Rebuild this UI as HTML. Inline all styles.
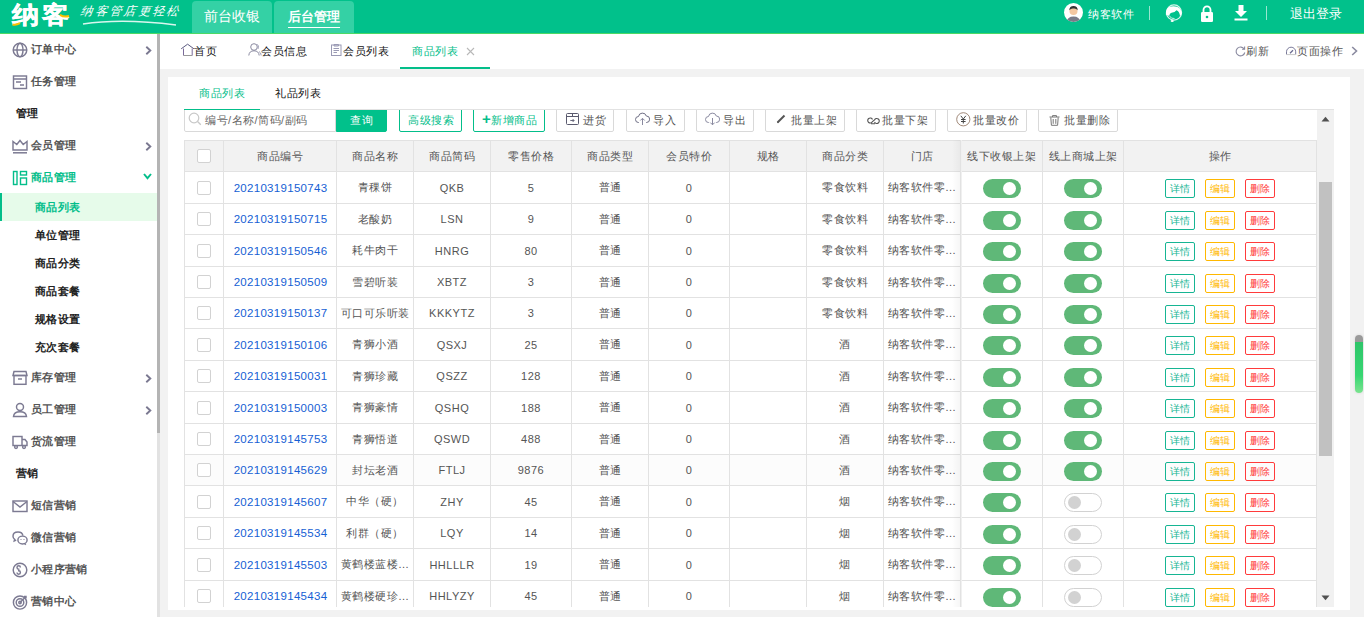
<!DOCTYPE html>
<html><head><meta charset="utf-8">
<style>
*{box-sizing:border-box;margin:0;padding:0}
html,body{width:1364px;height:617px;overflow:hidden;background:#f2f2f2;font-family:"Liberation Sans",sans-serif;color:#333}
.abs{position:absolute}
.tt{top:10px;font-size:11px;letter-spacing:.5px;line-height:14px;white-space:nowrap;font-weight:500}
.tt2{font-size:11px;letter-spacing:.5px;line-height:14px;white-space:nowrap}
.btn{top:100px;height:32px;border:1px solid #d9d9d9;border-radius:2px;background:#fff}
.bt{top:12px;font-size:11px;letter-spacing:.5px;line-height:14px;white-space:nowrap}
.si{left:31px;font-size:11px;letter-spacing:.3px;font-weight:bold;line-height:16px;white-space:nowrap}
.htab{top:1px;height:32px;background:#34d1a5;border-radius:4px 4px 0 0;color:#fff;font-size:14px;text-align:center;line-height:31px}
.htab.act{font-weight:bold;font-size:13px}
.htab.act span{border-bottom:1.5px solid #fff;padding-bottom:3px}
#hdr{position:absolute;left:0;top:0;width:1364px;height:34px;background:#01c18b;border-bottom:1px solid #4cd964}
#side{position:absolute;left:0;top:34px;width:157px;height:583px;background:#fff;overflow:hidden}
#sbar{position:absolute;left:157px;top:34px;width:3px;height:583px;background:#e2e2e2}
#sthumb{position:absolute;left:157px;top:34px;width:3px;height:399px;background:#b4b4b4}
#tabs{position:absolute;left:160px;top:34px;width:1204px;height:35px;background:#fff}
#panel{position:absolute;left:168px;top:77px;width:1182px;height:533px;background:#fff}
.c{position:absolute;border-right:1px solid #e2e2e2;border-bottom:1px solid #e2e2e2;display:flex;align-items:center;justify-content:center;font-size:11px;letter-spacing:.5px;color:#555;white-space:nowrap;overflow:hidden;background:#fff}
.cb{display:inline-block;position:relative;left:-0.5px;width:14px;height:14px;border:1px solid #d2d2d2;border-radius:2px;background:#fff}
.lnk{color:#1560d4;font-size:11.5px;letter-spacing:.3px;position:relative;left:.5px}
.sw{display:inline-block;position:relative;top:1px;width:38px;height:19px;border-radius:10px}
.sw.on{background:#5fb878}
.sw.off{background:#fff;border:1px solid #d2d2d2}
.sw i{position:absolute;width:13px;height:13px;border-radius:50%;top:3px}
.sw.on i{background:#fff;left:20px}
.sw.off i{background:#d2d2d2;left:3px;top:2px}
.ab{display:inline-block;position:relative;top:1px;width:30px;height:19px;border:1px solid;border-radius:2px;font-size:10px;line-height:18px;text-align:center;margin:0 5px;letter-spacing:0}
.ab.g{color:#16b593;border-color:#16b593}
.ab.y{color:#ffb800;border-color:#ffb800}
.ab.r{color:#ff3b3b;border-color:#ff3b3b}
</style></head><body>
<div id="hdr">
 <div class="abs logo" style="left:12px;top:-1px;font-size:27px;line-height:32px;font-weight:900;color:#fff;letter-spacing:2px;-webkit-text-stroke:.4px #fff;transform:scale(1.02,.9);transform-origin:0 50%">纳客</div>
 <svg class="abs" style="left:12px;top:13px" width="58" height="14" viewBox="0 0 58 14"><path d="M0.5 11.5 Q4 12.5 8 10.2" stroke="#ffc000" stroke-width="2" fill="none"/><path d="M48 1.8 Q52 4.5 57 3" stroke="#ffc000" stroke-width="2" fill="none"/></svg>
 <div class="abs slogan" style="left:81px;top:4px;font-size:12px;line-height:14px;color:#fff;font-weight:500;font-style:italic;letter-spacing:2.3px;transform:skewX(-8deg)">纳客管店更轻松</div>
 <svg class="abs" style="left:82px;top:19px" width="96" height="8"><path d="M1 5 Q40 -1 94 6" stroke="#fff" stroke-width="1.3" fill="none" opacity=".85"/></svg>
 <div class="abs htab" style="left:192px;width:80px">前台收银</div>
 <div class="abs htab act" style="left:274px;width:80px"><span>后台管理</span></div>
 <div class="abs" style="left:1064px;top:3px;width:19px;height:19px;border-radius:50%;background:#fff;overflow:hidden">
   <svg width="19" height="19" viewBox="0 0 19 19"><circle cx="9.5" cy="8" r="4" fill="#f4c7a1"/><path d="M5.3 7.2 Q5.5 3 9.5 3 Q13.5 3 13.7 7.2 Q12 5.2 9.5 5.6 Q7 5.2 5.3 7.2Z" fill="#333"/><path d="M2.5 19 Q3.5 13.5 9.5 13.5 Q15.5 13.5 16.5 19Z" fill="#7a7a88"/></svg>
 </div>
 <div class="abs" style="left:1088px;top:6px;font-size:11px;letter-spacing:.5px;line-height:16px;color:#fff;font-weight:500">纳客软件</div>
 <div class="abs" style="left:1149px;top:6px;width:1px;height:14px;background:rgba(255,255,255,.6)"></div>
 <svg class="abs" style="left:1165px;top:3px" width="18" height="19" viewBox="0 0 18 19"><circle cx="9" cy="9.5" r="7.6" stroke="#fff" stroke-width="1.1" fill="none" opacity=".85"/><path d="M0.8 11.5 Q0.6 4.5 6 3.6 Q9 3 12 3.8 Q16.5 5 16.8 11 L15 13 Q14.5 8.5 11.5 7.2 Q10 9.5 6.5 9.8 Q4.5 10.2 4.2 13 Z" fill="#fff"/><path d="M4.5 13 Q6 16 9.5 15.5" stroke="#fff" stroke-width="1" fill="none" opacity=".8"/><ellipse cx="7.2" cy="18" rx="1.6" ry="1" fill="#fff"/></svg>
 <svg class="abs" style="left:1200px;top:5px" width="14" height="17" viewBox="0 0 14 17"><path d="M3.5 7 V4.8 A3.5 3.5 0 0 1 10.5 4.8 V7" stroke="#fff" stroke-width="1.8" fill="none"/><rect x="1" y="7" width="12" height="10" rx="1.2" fill="#fff"/><circle cx="7" cy="12" r="1.3" fill="#01c18b"/></svg>
 <svg class="abs" style="left:1234px;top:5px" width="14" height="16" viewBox="0 0 14 16"><path d="M4.5 0 H9.5 V6 H13 L7 12 L1 6 H4.5Z" fill="#fff"/><rect x="0.5" y="13.5" width="13" height="2" fill="#fff"/></svg>
 <div class="abs" style="left:1266px;top:6px;width:1px;height:14px;background:rgba(255,255,255,.6)"></div>
 <div class="abs" style="left:1290px;top:6px;font-size:13px;line-height:16px;color:#fff">退出登录</div>
</div>
<div id="side"><div class="abs si" style="top:7px;color:#555">订单中心</div><svg class="abs" style="left:12px;top:8px" width="16" height="16" viewBox="0 0 16 16"><circle cx="8" cy="8" r="6.8" stroke="#7c7a92" stroke-width="1.45" fill="none"/><ellipse cx="8" cy="8" rx="3" ry="6.8" stroke="#7c7a92" stroke-width="1.45" fill="none"/><path d="M1.2 8 H14.8" stroke="#7c7a92" stroke-width="1.45" fill="none"/></svg><svg class="abs" style="left:145px;top:12px" width="7" height="9" viewBox="0 0 7 9"><path d="M1.3 0.8 L5.3 4.5 L1.3 8.2" stroke="#7a7890" stroke-width="1.9" fill="none"/></svg><div class="abs si" style="top:39px;color:#555">任务管理</div><svg class="abs" style="left:12px;top:40px" width="16" height="16" viewBox="0 0 16 16"><rect x="1.5" y="2" width="13" height="12.5" stroke="#7c7a92" stroke-width="1.45" fill="none"/><path d="M1.5 5 H14.5 M4 8 H9 M8 11 H12" stroke="#7c7a92" stroke-width="1.45" fill="none"/></svg><div class="abs si" style="left:16px;top:71px;color:#222">管理</div><div class="abs si" style="top:103px;color:#555">会员管理</div><svg class="abs" style="left:12px;top:104px" width="16" height="16" viewBox="0 0 16 16"><path d="M1 12 V3.5 L4.8 6.5 L8 2.5 L11.2 6.5 L15 3.5 V12 Z" stroke="#7c7a92" stroke-width="1.45" fill="none"/><path d="M1 14.8 H15" stroke="#7c7a92" stroke-width="1.5"/></svg><svg class="abs" style="left:145px;top:108px" width="7" height="9" viewBox="0 0 7 9"><path d="M1.3 0.8 L5.3 4.5 L1.3 8.2" stroke="#7a7890" stroke-width="1.9" fill="none"/></svg><div class="abs si" style="top:135px;color:#03be8a">商品管理</div><svg class="abs" style="left:12px;top:136px" width="16" height="16" viewBox="0 0 16 16"><rect x="1.5" y="1.5" width="3.5" height="13" stroke="#03be8a" stroke-width="1.4" fill="none"/><rect x="8.5" y="1.5" width="6" height="3.5" stroke="#03be8a" stroke-width="1.4" fill="none"/><rect x="8.5" y="8" width="6" height="6.5" stroke="#03be8a" stroke-width="1.4" fill="none"/></svg><svg class="abs" style="left:143px;top:139px" width="9" height="7" viewBox="0 0 9 7"><path d="M1 1 L4.5 5.2 L8 1" stroke="#03be8a" stroke-width="1.9" fill="none"/></svg><div class="abs" style="left:0;top:159px;width:157px;height:28px;background:#e6fbea;border-left:2px solid #03be8a"></div><div class="abs si" style="left:35px;top:165px;color:#03be8a">商品列表</div><div class="abs si" style="left:35px;top:193px;color:#222">单位管理</div><div class="abs si" style="left:35px;top:221px;color:#222">商品分类</div><div class="abs si" style="left:35px;top:249px;color:#222">商品套餐</div><div class="abs si" style="left:35px;top:277px;color:#222">规格设置</div><div class="abs si" style="left:35px;top:305px;color:#222">充次套餐</div><div class="abs si" style="top:335px;color:#555">库存管理</div><svg class="abs" style="left:12px;top:336px" width="16" height="16" viewBox="0 0 16 16"><path d="M2 1.5 H14 L15 5.5 H1 Z" stroke="#7c7a92" stroke-width="1.45" fill="none"/><rect x="2" y="5.5" width="12" height="8.8" stroke="#7c7a92" stroke-width="1.45" fill="none"/><path d="M6 9 H10" stroke="#7c7a92" stroke-width="1.45" fill="none"/></svg><svg class="abs" style="left:145px;top:340px" width="7" height="9" viewBox="0 0 7 9"><path d="M1.3 0.8 L5.3 4.5 L1.3 8.2" stroke="#7a7890" stroke-width="1.9" fill="none"/></svg><div class="abs si" style="top:367px;color:#555">员工管理</div><svg class="abs" style="left:12px;top:368px" width="16" height="16" viewBox="0 0 16 16"><circle cx="8" cy="5" r="3.5" stroke="#7c7a92" stroke-width="1.45" fill="none"/><path d="M1.5 14.5 Q2 9.8 8 9.8 Q14 9.8 14.5 14.5 Z" stroke="#7c7a92" stroke-width="1.45" fill="none"/></svg><svg class="abs" style="left:145px;top:372px" width="7" height="9" viewBox="0 0 7 9"><path d="M1.3 0.8 L5.3 4.5 L1.3 8.2" stroke="#7a7890" stroke-width="1.9" fill="none"/></svg><div class="abs si" style="top:399px;color:#555">货流管理</div><svg class="abs" style="left:12px;top:400px" width="16" height="16" viewBox="0 0 16 16"><rect x="1" y="2.5" width="9" height="9" stroke="#7c7a92" stroke-width="1.45" fill="none"/><path d="M10 5.5 H13 L15 8 V11.5 H10" stroke="#7c7a92" stroke-width="1.45" fill="none"/><circle cx="4" cy="13" r="1.4" stroke="#7c7a92" stroke-width="1.45" fill="none"/><circle cx="12" cy="13" r="1.4" stroke="#7c7a92" stroke-width="1.45" fill="none"/></svg><div class="abs si" style="left:16px;top:431px;color:#222">营销</div><div class="abs si" style="top:463px;color:#555">短信营销</div><svg class="abs" style="left:12px;top:464px" width="16" height="16" viewBox="0 0 16 16"><rect x="1" y="3" width="14" height="10.5" stroke="#7c7a92" stroke-width="1.45" fill="none"/><path d="M1 3.5 L8 9 L15 3.5" stroke="#7c7a92" stroke-width="1.45" fill="none"/></svg><div class="abs si" style="top:495px;color:#555">微信营销</div><svg class="abs" style="left:12px;top:496px" width="16" height="16" viewBox="0 0 16 16"><path d="M6 2 C2.8 2 1 4 1 6.2 C1 7.6 1.7 8.6 2.6 9.3 L2.2 11 L4.2 10.2" stroke="#7c7a92" stroke-width="1.45" fill="none"/><path d="M6 2 C8.8 2 10.6 3.5 10.9 5.6" stroke="#7c7a92" stroke-width="1.45" fill="none"/><ellipse cx="10.5" cy="10" rx="4.6" ry="3.9" stroke="#7c7a92" stroke-width="1.45" fill="none"/><path d="M12.6 13.5 L13.8 14.8" stroke="#7c7a92" stroke-width="1.45" fill="none"/><circle cx="9" cy="9.5" r=".6" fill="#7c7a92"/><circle cx="12" cy="9.5" r=".6" fill="#7c7a92"/></svg><div class="abs si" style="top:527px;color:#555">小程序营销</div><svg class="abs" style="left:12px;top:528px" width="16" height="16" viewBox="0 0 16 16"><circle cx="8" cy="8" r="6.8" stroke="#7c7a92" stroke-width="1.45" fill="none"/><path d="M5 10.5 A1.7 1.7 0 1 0 6.7 8.8 V7.2 A1.7 1.7 0 1 1 8.4 5.5" stroke="#7c7a92" stroke-width="1.45" fill="none"/></svg><div class="abs si" style="top:559px;color:#555">营销中心</div><svg class="abs" style="left:12px;top:560px" width="16" height="16" viewBox="0 0 16 16"><circle cx="8" cy="8.5" r="6.6" stroke="#7c7a92" stroke-width="1.45" fill="none"/><circle cx="8" cy="8.5" r="3.8" stroke="#7c7a92" stroke-width="1.45" fill="none"/><circle cx="8" cy="8.5" r="1.2" stroke="#7c7a92" stroke-width="1.45" fill="none"/><path d="M8 8.5 L14 2.5 M12 2.5 H14 V4.5" stroke="#7c7a92" stroke-width="1.45" fill="none"/></svg></div>
<div id="sbar"></div><div id="sthumb"></div>
<div id="tabs">
 <svg class="abs" style="left:20px;top:9px" width="15" height="14" viewBox="0 0 15 14"><path d="M1.2 5.8 L7.6 1.2 L13.9 5.8" stroke="#5a5a80" stroke-width="1" fill="none"/><path d="M3.5 5.5 V12.5 M12.2 5.5 V12.5" stroke="#7a6a9a" stroke-width="1" fill="none"/><path d="M3.5 12.5 H12.2" stroke="#999" stroke-width="1" fill="none"/></svg>
 <div class="abs tt" style="left:34px;color:#111">首页</div>
 <svg class="abs" style="left:88px;top:9px" width="14" height="13" viewBox="0 0 14 13"><circle cx="6" cy="4" r="3.3" stroke="#8a8aa0" stroke-width="1" fill="none"/><path d="M0.8 12.5 Q1.2 7.8 6 7.8 Q10.8 7.8 11.2 12.5" stroke="#8a8aa0" stroke-width="1" fill="none"/><path d="M9 1.2 Q11.5 2.5 10 6 M11 8.5 Q13 9.5 13.2 12.5" stroke="#a0a0b8" stroke-width="1" fill="none"/></svg>
 <div class="abs tt" style="left:101px;color:#111">会员信息</div>
 <svg class="abs" style="left:171px;top:10px" width="11" height="12" viewBox="0 0 11 12"><rect x="0.5" y="1" width="9.5" height="10.5" stroke="#9a9ab4" stroke-width="1" fill="none"/><path d="M3 0.5 H7.5 V2 H3Z M2.5 4.5 H8 M2.5 6.5 H8 M2.5 8.5 H6" stroke="#9a9ab4" stroke-width="1" fill="none"/></svg>
 <div class="abs tt" style="left:183px;color:#111">会员列表</div>
 <div class="abs tt" style="left:252px;color:#03be8a">商品列表</div>
 <svg class="abs" style="left:306px;top:13px" width="9" height="9" viewBox="0 0 9 9"><path d="M1 1 L8 8 M8 1 L1 8" stroke="#b8b8b8" stroke-width="1.1"/></svg>
 <div class="abs" style="left:240px;top:33px;width:90px;height:2px;background:#03be8a"></div>
 <svg class="abs" style="left:1075px;top:12px" width="11" height="11" viewBox="0 0 11 11"><path d="M9.3 3.2 A4.4 4.4 0 1 0 9.8 6.5" stroke="#8a8aa0" stroke-width="1.1" fill="none"/><path d="M7 3.2 H9.6 V0.6" stroke="#8a8aa0" stroke-width="1.1" fill="none"/></svg>
 <div class="abs tt" style="left:1086px;color:#555">刷新</div>
 <svg class="abs" style="left:1125px;top:12px" width="12" height="10" viewBox="0 0 12 10"><path d="M1.5 8.5 V5.8 A4.6 4.6 0 0 1 10.7 5.8 V8.5" stroke="#7a7a9a" stroke-width="1" fill="none"/><path d="M1.5 8.6 H10.7" stroke="#c8c8c8" stroke-width="1"/><path d="M5 7.2 L8 4.3" stroke="#6a6a90" stroke-width="1.2"/></svg>
 <div class="abs tt" style="left:1137px;color:#555">页面操作</div>
 <svg class="abs" style="left:1191px;top:12px" width="7" height="10" viewBox="0 0 7 10"><path d="M1.2 1 L5.5 5 L1.2 9" stroke="#8a8aa0" stroke-width="1.6" fill="none"/></svg>
</div>
<div id="panel">
 <div class="abs tt2" style="left:31px;top:9px;color:#03be8a">商品列表</div>
 <div class="abs tt2" style="left:107px;top:9px;color:#111">礼品列表</div>
</div>
<div class="abs" style="left:184px;top:109px;width:1150px;height:1px;background:#e2e2e2"></div>
<div class="abs" style="left:184px;top:109px;width:76px;height:1px;background:#03be8a"></div>
<div class="abs" style="left:1317px;top:110px;width:17px;height:497px;background:#f1f1f1"></div>
<svg class="abs" style="left:1321px;top:116px" width="9" height="6" viewBox="0 0 9 6"><path d="M0.5 5.5 L4.5 0.8 L8.5 5.5Z" fill="#505050"/></svg>
<svg class="abs" style="left:1321px;top:595px" width="9" height="6" viewBox="0 0 9 6"><path d="M0.5 0.5 L4.5 5.2 L8.5 0.5Z" fill="#505050"/></svg>
<div class="abs" style="left:1319px;top:182px;width:13px;height:274px;background:#c1c1c1"></div>
<div class="abs" style="left:184px;top:110px;width:1133px;height:22px;overflow:hidden">
 <div class="abs" style="left:-184px;top:-110px;width:1364px;height:140px">
<div class="abs btn" style="left:184px;width:152px;border-color:#d9d9d9;border-radius:0 0 0 2px"><svg class="abs" style="left:3px;top:11px" width="14" height="14" viewBox="0 0 14 14"><circle cx="6" cy="6" r="4.8" stroke="#c8c8c8" stroke-width="1.2" fill="none"/><path d="M9.5 9.5 L12.8 12.8" stroke="#c8c8c8" stroke-width="1.3"/></svg><span class="abs bt" style="left:20px;color:#666">编号/名称/简码/副码</span></div>
<div class="abs btn" style="left:336px;width:51px;background:#01c18b;border-color:#01c18b;border-radius:0 0 2px 0"><span class="abs bt" style="left:13px;color:#fff">查询</span></div>
<div class="abs btn" style="left:399px;width:63px;border-color:#03be8a"><span class="abs bt" style="left:8px;color:#03be8a">高级搜索</span></div>
<div class="abs btn" style="left:473px;width:72px;border-color:#03be8a"><span class="abs bt" style="left:8px;color:#03be8a"><b style="font-size:15px;font-weight:bold;line-height:10px">+</b>新增商品</span></div>
<div class="abs btn" style="left:556px;width:58px;"><svg class="abs" style="left:8px;top:11px" width="15" height="13" viewBox="0 0 15 13"><rect x="1.5" y="1.5" width="12" height="11" rx="1" stroke="#5a5a6e" stroke-width="1" fill="none"/><path d="M1.5 4.5 H13.5 M7.5 1.5 V4.5" stroke="#5a5a6e" stroke-width="1" fill="none"/><path d="M5.3 8.5 H9 M7.6 7 L9.1 8.5 L7.6 10" stroke="#6a6a7e" stroke-width="1" fill="none"/></svg><span class="abs bt" style="left:26px;color:#555">进货</span></div>
<div class="abs btn" style="left:626px;width:59px;"><svg class="abs" style="left:8px;top:11px" width="15" height="14" viewBox="0 0 15 14"><path d="M4 10.5 H3.5 A3 3 0 0 1 3.5 4.5 A4 4 0 0 1 11.3 4 A3.2 3.2 0 0 1 11.5 10.5 H11" stroke="#6e6e84" stroke-width="1" fill="none"/><path d="M7.5 13 V6.5 M5.3 8.5 L7.5 6.3 L9.7 8.5" stroke="#8a8aa0" stroke-width="1" fill="none"/></svg><span class="abs bt" style="left:26px;color:#555">导入</span></div>
<div class="abs btn" style="left:696px;width:58px;"><svg class="abs" style="left:8px;top:11px" width="15" height="14" viewBox="0 0 15 14"><path d="M4 10.5 H3.5 A3 3 0 0 1 3.5 4.5 A4 4 0 0 1 11.3 4 A3.2 3.2 0 0 1 11.5 10.5 H11" stroke="#8a8aa0" stroke-width="1" fill="none"/><path d="M7.5 6 V12.8 M5.3 10.6 L7.5 12.8 L9.7 10.6" stroke="#8a8aa0" stroke-width="1" fill="none"/></svg><span class="abs bt" style="left:26px;color:#555">导出</span></div>
<div class="abs btn" style="left:765px;width:80px;"><svg class="abs" style="left:10px;top:13px" width="11" height="10" viewBox="0 0 11 10"><path d="M1.5 8.5 L8.5 1.5" stroke="#555" stroke-width="2"/><path d="M1 9.2 L1.5 7.5 L2.6 8.6Z" fill="#555"/></svg><span class="abs bt" style="left:25px;color:#555">批量上架</span></div>
<div class="abs btn" style="left:856px;width:80px;"><svg class="abs" style="left:9px;top:15px" width="14" height="9" viewBox="0 0 14 9"><path d="M6.5 3.5 A2.5 2.5 0 1 0 6.5 5.5 L8.5 4 A2.5 2.5 0 1 1 8.5 6 M5 7.8 H9" stroke="#555" stroke-width="1.1" fill="none"/></svg><span class="abs bt" style="left:25px;color:#555">批量下架</span></div>
<div class="abs btn" style="left:947px;width:80px;"><svg class="abs" style="left:8px;top:11px" width="15" height="15" viewBox="0 0 15 15"><circle cx="7.3" cy="7.3" r="6.6" stroke="#a08878" stroke-width="1" fill="none"/><path d="M4.8 3.8 L7.3 7 L9.8 3.8 M7.3 7 V11.5 M5 7.5 H9.6 M5 9.5 H9.6" stroke="#444" stroke-width="1" fill="none"/></svg><span class="abs bt" style="left:25px;color:#555">批量改价</span></div>
<div class="abs btn" style="left:1038px;width:80px;"><svg class="abs" style="left:10px;top:14px" width="11" height="11" viewBox="0 0 11 11"><path d="M0.5 2 H10.5 M3.5 2 V0.6 H7.5 V2 M1.8 2.5 L2.4 10.3 H8.6 L9.2 2.5 M4.2 4 V8.8 M6.8 4 V8.8" stroke="#777" stroke-width="1" fill="none"/></svg><span class="abs bt" style="left:25px;color:#555">批量删除</span></div>
 </div>
</div>
<div class="abs" style="left:184px;top:109px;width:1133px;height:498px;overflow:hidden">
 <div class="abs" style="left:-184px;top:-109px;width:1364px;height:617px">
 <div class="abs" style="left:184px;top:140px;width:1133px;height:1px;background:#e2e2e2"></div>
 <div class="abs" style="left:184px;top:140px;width:1px;height:480px;background:#e2e2e2"></div>
<div class="c" style="left:185px;top:141px;width:39px;height:31px;background:#f2f2f2;"><span class="cb"></span></div>
<div class="c" style="left:224px;top:141px;width:113px;height:31px;background:#f2f2f2;">商品编号</div>
<div class="c" style="left:337px;top:141px;width:77px;height:31px;background:#f2f2f2;">商品名称</div>
<div class="c" style="left:414px;top:141px;width:77px;height:31px;background:#f2f2f2;">商品简码</div>
<div class="c" style="left:491px;top:141px;width:81px;height:31px;background:#f2f2f2;">零售价格</div>
<div class="c" style="left:572px;top:141px;width:77px;height:31px;background:#f2f2f2;">商品类型</div>
<div class="c" style="left:649px;top:141px;width:81px;height:31px;background:#f2f2f2;">会员特价</div>
<div class="c" style="left:730px;top:141px;width:77px;height:31px;background:#f2f2f2;">规格</div>
<div class="c" style="left:807px;top:141px;width:77px;height:31px;background:#f2f2f2;">商品分类</div>
<div class="c" style="left:884px;top:141px;width:77px;height:31px;background:#f2f2f2;">门店</div>
<div class="c" style="left:961px;top:141px;width:82px;height:31px;background:#f2f2f2;">线下收银上架</div>
<div class="c" style="left:1043px;top:141px;width:81px;height:31px;background:#f2f2f2;">线上商城上架</div>
<div class="c" style="left:1124px;top:141px;width:193px;height:31px;background:#f2f2f2;">操作</div>
<div class="c" style="left:185px;top:172px;width:39px;height:32px;"><span class="cb"></span></div>
<div class="c" style="left:224px;top:172px;width:113px;height:32px;"><span class="lnk">20210319150743</span></div>
<div class="c" style="left:337px;top:172px;width:77px;height:32px;">青稞饼</div>
<div class="c" style="left:414px;top:172px;width:77px;height:32px;">QKB</div>
<div class="c" style="left:491px;top:172px;width:81px;height:32px;">5</div>
<div class="c" style="left:572px;top:172px;width:77px;height:32px;">普通</div>
<div class="c" style="left:649px;top:172px;width:81px;height:32px;">0</div>
<div class="c" style="left:730px;top:172px;width:77px;height:32px;"></div>
<div class="c" style="left:807px;top:172px;width:77px;height:32px;">零食饮料</div>
<div class="c" style="left:884px;top:172px;width:77px;height:32px;"><span class="store">纳客软件零...</span></div>
<div class="c" style="left:961px;top:172px;width:82px;height:32px;"><span class="sw on"><i></i></span></div>
<div class="c" style="left:1043px;top:172px;width:81px;height:32px;"><span class="sw on"><i></i></span></div>
<div class="c" style="left:1124px;top:172px;width:193px;height:32px;"><span class="ab g">详情</span><span class="ab y">编辑</span><span class="ab r">删除</span></div>
<div class="c" style="left:185px;top:204px;width:39px;height:31px;"><span class="cb"></span></div>
<div class="c" style="left:224px;top:204px;width:113px;height:31px;"><span class="lnk">20210319150715</span></div>
<div class="c" style="left:337px;top:204px;width:77px;height:31px;">老酸奶</div>
<div class="c" style="left:414px;top:204px;width:77px;height:31px;">LSN</div>
<div class="c" style="left:491px;top:204px;width:81px;height:31px;">9</div>
<div class="c" style="left:572px;top:204px;width:77px;height:31px;">普通</div>
<div class="c" style="left:649px;top:204px;width:81px;height:31px;">0</div>
<div class="c" style="left:730px;top:204px;width:77px;height:31px;"></div>
<div class="c" style="left:807px;top:204px;width:77px;height:31px;">零食饮料</div>
<div class="c" style="left:884px;top:204px;width:77px;height:31px;"><span class="store">纳客软件零...</span></div>
<div class="c" style="left:961px;top:204px;width:82px;height:31px;"><span class="sw on"><i></i></span></div>
<div class="c" style="left:1043px;top:204px;width:81px;height:31px;"><span class="sw on"><i></i></span></div>
<div class="c" style="left:1124px;top:204px;width:193px;height:31px;"><span class="ab g">详情</span><span class="ab y">编辑</span><span class="ab r">删除</span></div>
<div class="c" style="left:185px;top:235px;width:39px;height:32px;"><span class="cb"></span></div>
<div class="c" style="left:224px;top:235px;width:113px;height:32px;"><span class="lnk">20210319150546</span></div>
<div class="c" style="left:337px;top:235px;width:77px;height:32px;">耗牛肉干</div>
<div class="c" style="left:414px;top:235px;width:77px;height:32px;">HNRG</div>
<div class="c" style="left:491px;top:235px;width:81px;height:32px;">80</div>
<div class="c" style="left:572px;top:235px;width:77px;height:32px;">普通</div>
<div class="c" style="left:649px;top:235px;width:81px;height:32px;">0</div>
<div class="c" style="left:730px;top:235px;width:77px;height:32px;"></div>
<div class="c" style="left:807px;top:235px;width:77px;height:32px;">零食饮料</div>
<div class="c" style="left:884px;top:235px;width:77px;height:32px;"><span class="store">纳客软件零...</span></div>
<div class="c" style="left:961px;top:235px;width:82px;height:32px;"><span class="sw on"><i></i></span></div>
<div class="c" style="left:1043px;top:235px;width:81px;height:32px;"><span class="sw on"><i></i></span></div>
<div class="c" style="left:1124px;top:235px;width:193px;height:32px;"><span class="ab g">详情</span><span class="ab y">编辑</span><span class="ab r">删除</span></div>
<div class="c" style="left:185px;top:267px;width:39px;height:31px;"><span class="cb"></span></div>
<div class="c" style="left:224px;top:267px;width:113px;height:31px;"><span class="lnk">20210319150509</span></div>
<div class="c" style="left:337px;top:267px;width:77px;height:31px;">雪碧听装</div>
<div class="c" style="left:414px;top:267px;width:77px;height:31px;">XBTZ</div>
<div class="c" style="left:491px;top:267px;width:81px;height:31px;">3</div>
<div class="c" style="left:572px;top:267px;width:77px;height:31px;">普通</div>
<div class="c" style="left:649px;top:267px;width:81px;height:31px;">0</div>
<div class="c" style="left:730px;top:267px;width:77px;height:31px;"></div>
<div class="c" style="left:807px;top:267px;width:77px;height:31px;">零食饮料</div>
<div class="c" style="left:884px;top:267px;width:77px;height:31px;"><span class="store">纳客软件零...</span></div>
<div class="c" style="left:961px;top:267px;width:82px;height:31px;"><span class="sw on"><i></i></span></div>
<div class="c" style="left:1043px;top:267px;width:81px;height:31px;"><span class="sw on"><i></i></span></div>
<div class="c" style="left:1124px;top:267px;width:193px;height:31px;"><span class="ab g">详情</span><span class="ab y">编辑</span><span class="ab r">删除</span></div>
<div class="c" style="left:185px;top:298px;width:39px;height:31px;"><span class="cb"></span></div>
<div class="c" style="left:224px;top:298px;width:113px;height:31px;"><span class="lnk">20210319150137</span></div>
<div class="c" style="left:337px;top:298px;width:77px;height:31px;">可口可乐听装</div>
<div class="c" style="left:414px;top:298px;width:77px;height:31px;">KKKYTZ</div>
<div class="c" style="left:491px;top:298px;width:81px;height:31px;">3</div>
<div class="c" style="left:572px;top:298px;width:77px;height:31px;">普通</div>
<div class="c" style="left:649px;top:298px;width:81px;height:31px;">0</div>
<div class="c" style="left:730px;top:298px;width:77px;height:31px;"></div>
<div class="c" style="left:807px;top:298px;width:77px;height:31px;">零食饮料</div>
<div class="c" style="left:884px;top:298px;width:77px;height:31px;"><span class="store">纳客软件零...</span></div>
<div class="c" style="left:961px;top:298px;width:82px;height:31px;"><span class="sw on"><i></i></span></div>
<div class="c" style="left:1043px;top:298px;width:81px;height:31px;"><span class="sw on"><i></i></span></div>
<div class="c" style="left:1124px;top:298px;width:193px;height:31px;"><span class="ab g">详情</span><span class="ab y">编辑</span><span class="ab r">删除</span></div>
<div class="c" style="left:185px;top:329px;width:39px;height:32px;"><span class="cb"></span></div>
<div class="c" style="left:224px;top:329px;width:113px;height:32px;"><span class="lnk">20210319150106</span></div>
<div class="c" style="left:337px;top:329px;width:77px;height:32px;">青狮小酒</div>
<div class="c" style="left:414px;top:329px;width:77px;height:32px;">QSXJ</div>
<div class="c" style="left:491px;top:329px;width:81px;height:32px;">25</div>
<div class="c" style="left:572px;top:329px;width:77px;height:32px;">普通</div>
<div class="c" style="left:649px;top:329px;width:81px;height:32px;">0</div>
<div class="c" style="left:730px;top:329px;width:77px;height:32px;"></div>
<div class="c" style="left:807px;top:329px;width:77px;height:32px;">酒</div>
<div class="c" style="left:884px;top:329px;width:77px;height:32px;"><span class="store">纳客软件零...</span></div>
<div class="c" style="left:961px;top:329px;width:82px;height:32px;"><span class="sw on"><i></i></span></div>
<div class="c" style="left:1043px;top:329px;width:81px;height:32px;"><span class="sw on"><i></i></span></div>
<div class="c" style="left:1124px;top:329px;width:193px;height:32px;"><span class="ab g">详情</span><span class="ab y">编辑</span><span class="ab r">删除</span></div>
<div class="c" style="left:185px;top:361px;width:39px;height:31px;"><span class="cb"></span></div>
<div class="c" style="left:224px;top:361px;width:113px;height:31px;"><span class="lnk">20210319150031</span></div>
<div class="c" style="left:337px;top:361px;width:77px;height:31px;">青狮珍藏</div>
<div class="c" style="left:414px;top:361px;width:77px;height:31px;">QSZZ</div>
<div class="c" style="left:491px;top:361px;width:81px;height:31px;">128</div>
<div class="c" style="left:572px;top:361px;width:77px;height:31px;">普通</div>
<div class="c" style="left:649px;top:361px;width:81px;height:31px;">0</div>
<div class="c" style="left:730px;top:361px;width:77px;height:31px;"></div>
<div class="c" style="left:807px;top:361px;width:77px;height:31px;">酒</div>
<div class="c" style="left:884px;top:361px;width:77px;height:31px;"><span class="store">纳客软件零...</span></div>
<div class="c" style="left:961px;top:361px;width:82px;height:31px;"><span class="sw on"><i></i></span></div>
<div class="c" style="left:1043px;top:361px;width:81px;height:31px;"><span class="sw on"><i></i></span></div>
<div class="c" style="left:1124px;top:361px;width:193px;height:31px;"><span class="ab g">详情</span><span class="ab y">编辑</span><span class="ab r">删除</span></div>
<div class="c" style="left:185px;top:392px;width:39px;height:32px;"><span class="cb"></span></div>
<div class="c" style="left:224px;top:392px;width:113px;height:32px;"><span class="lnk">20210319150003</span></div>
<div class="c" style="left:337px;top:392px;width:77px;height:32px;">青狮豪情</div>
<div class="c" style="left:414px;top:392px;width:77px;height:32px;">QSHQ</div>
<div class="c" style="left:491px;top:392px;width:81px;height:32px;">188</div>
<div class="c" style="left:572px;top:392px;width:77px;height:32px;">普通</div>
<div class="c" style="left:649px;top:392px;width:81px;height:32px;">0</div>
<div class="c" style="left:730px;top:392px;width:77px;height:32px;"></div>
<div class="c" style="left:807px;top:392px;width:77px;height:32px;">酒</div>
<div class="c" style="left:884px;top:392px;width:77px;height:32px;"><span class="store">纳客软件零...</span></div>
<div class="c" style="left:961px;top:392px;width:82px;height:32px;"><span class="sw on"><i></i></span></div>
<div class="c" style="left:1043px;top:392px;width:81px;height:32px;"><span class="sw on"><i></i></span></div>
<div class="c" style="left:1124px;top:392px;width:193px;height:32px;"><span class="ab g">详情</span><span class="ab y">编辑</span><span class="ab r">删除</span></div>
<div class="c" style="left:185px;top:424px;width:39px;height:31px;"><span class="cb"></span></div>
<div class="c" style="left:224px;top:424px;width:113px;height:31px;"><span class="lnk">20210319145753</span></div>
<div class="c" style="left:337px;top:424px;width:77px;height:31px;">青狮悟道</div>
<div class="c" style="left:414px;top:424px;width:77px;height:31px;">QSWD</div>
<div class="c" style="left:491px;top:424px;width:81px;height:31px;">488</div>
<div class="c" style="left:572px;top:424px;width:77px;height:31px;">普通</div>
<div class="c" style="left:649px;top:424px;width:81px;height:31px;">0</div>
<div class="c" style="left:730px;top:424px;width:77px;height:31px;"></div>
<div class="c" style="left:807px;top:424px;width:77px;height:31px;">酒</div>
<div class="c" style="left:884px;top:424px;width:77px;height:31px;"><span class="store">纳客软件零...</span></div>
<div class="c" style="left:961px;top:424px;width:82px;height:31px;"><span class="sw on"><i></i></span></div>
<div class="c" style="left:1043px;top:424px;width:81px;height:31px;"><span class="sw on"><i></i></span></div>
<div class="c" style="left:1124px;top:424px;width:193px;height:31px;"><span class="ab g">详情</span><span class="ab y">编辑</span><span class="ab r">删除</span></div>
<div class="c" style="left:185px;top:455px;width:39px;height:31px;background:#fcfcfc;"><span class="cb"></span></div>
<div class="c" style="left:224px;top:455px;width:113px;height:31px;background:#fcfcfc;"><span class="lnk">20210319145629</span></div>
<div class="c" style="left:337px;top:455px;width:77px;height:31px;background:#fcfcfc;">封坛老酒</div>
<div class="c" style="left:414px;top:455px;width:77px;height:31px;background:#fcfcfc;">FTLJ</div>
<div class="c" style="left:491px;top:455px;width:81px;height:31px;background:#fcfcfc;">9876</div>
<div class="c" style="left:572px;top:455px;width:77px;height:31px;background:#fcfcfc;">普通</div>
<div class="c" style="left:649px;top:455px;width:81px;height:31px;background:#fcfcfc;">0</div>
<div class="c" style="left:730px;top:455px;width:77px;height:31px;background:#fcfcfc;"></div>
<div class="c" style="left:807px;top:455px;width:77px;height:31px;background:#fcfcfc;">酒</div>
<div class="c" style="left:884px;top:455px;width:77px;height:31px;background:#fcfcfc;"><span class="store">纳客软件零...</span></div>
<div class="c" style="left:961px;top:455px;width:82px;height:31px;background:#fcfcfc;"><span class="sw on"><i></i></span></div>
<div class="c" style="left:1043px;top:455px;width:81px;height:31px;background:#fcfcfc;"><span class="sw on"><i></i></span></div>
<div class="c" style="left:1124px;top:455px;width:193px;height:31px;background:#fcfcfc;"><span class="ab g">详情</span><span class="ab y">编辑</span><span class="ab r">删除</span></div>
<div class="c" style="left:185px;top:486px;width:39px;height:32px;"><span class="cb"></span></div>
<div class="c" style="left:224px;top:486px;width:113px;height:32px;"><span class="lnk">20210319145607</span></div>
<div class="c" style="left:337px;top:486px;width:77px;height:32px;">中华（硬）</div>
<div class="c" style="left:414px;top:486px;width:77px;height:32px;">ZHY</div>
<div class="c" style="left:491px;top:486px;width:81px;height:32px;">45</div>
<div class="c" style="left:572px;top:486px;width:77px;height:32px;">普通</div>
<div class="c" style="left:649px;top:486px;width:81px;height:32px;">0</div>
<div class="c" style="left:730px;top:486px;width:77px;height:32px;"></div>
<div class="c" style="left:807px;top:486px;width:77px;height:32px;">烟</div>
<div class="c" style="left:884px;top:486px;width:77px;height:32px;"><span class="store">纳客软件零...</span></div>
<div class="c" style="left:961px;top:486px;width:82px;height:32px;"><span class="sw on"><i></i></span></div>
<div class="c" style="left:1043px;top:486px;width:81px;height:32px;"><span class="sw off"><i></i></span></div>
<div class="c" style="left:1124px;top:486px;width:193px;height:32px;"><span class="ab g">详情</span><span class="ab y">编辑</span><span class="ab r">删除</span></div>
<div class="c" style="left:185px;top:518px;width:39px;height:31px;"><span class="cb"></span></div>
<div class="c" style="left:224px;top:518px;width:113px;height:31px;"><span class="lnk">20210319145534</span></div>
<div class="c" style="left:337px;top:518px;width:77px;height:31px;">利群（硬）</div>
<div class="c" style="left:414px;top:518px;width:77px;height:31px;">LQY</div>
<div class="c" style="left:491px;top:518px;width:81px;height:31px;">14</div>
<div class="c" style="left:572px;top:518px;width:77px;height:31px;">普通</div>
<div class="c" style="left:649px;top:518px;width:81px;height:31px;">0</div>
<div class="c" style="left:730px;top:518px;width:77px;height:31px;"></div>
<div class="c" style="left:807px;top:518px;width:77px;height:31px;">烟</div>
<div class="c" style="left:884px;top:518px;width:77px;height:31px;"><span class="store">纳客软件零...</span></div>
<div class="c" style="left:961px;top:518px;width:82px;height:31px;"><span class="sw on"><i></i></span></div>
<div class="c" style="left:1043px;top:518px;width:81px;height:31px;"><span class="sw off"><i></i></span></div>
<div class="c" style="left:1124px;top:518px;width:193px;height:31px;"><span class="ab g">详情</span><span class="ab y">编辑</span><span class="ab r">删除</span></div>
<div class="c" style="left:185px;top:549px;width:39px;height:32px;"><span class="cb"></span></div>
<div class="c" style="left:224px;top:549px;width:113px;height:32px;"><span class="lnk">20210319145503</span></div>
<div class="c" style="left:337px;top:549px;width:77px;height:32px;">黄鹤楼蓝楼...</div>
<div class="c" style="left:414px;top:549px;width:77px;height:32px;">HHLLLR</div>
<div class="c" style="left:491px;top:549px;width:81px;height:32px;">19</div>
<div class="c" style="left:572px;top:549px;width:77px;height:32px;">普通</div>
<div class="c" style="left:649px;top:549px;width:81px;height:32px;">0</div>
<div class="c" style="left:730px;top:549px;width:77px;height:32px;"></div>
<div class="c" style="left:807px;top:549px;width:77px;height:32px;">烟</div>
<div class="c" style="left:884px;top:549px;width:77px;height:32px;"><span class="store">纳客软件零...</span></div>
<div class="c" style="left:961px;top:549px;width:82px;height:32px;"><span class="sw on"><i></i></span></div>
<div class="c" style="left:1043px;top:549px;width:81px;height:32px;"><span class="sw off"><i></i></span></div>
<div class="c" style="left:1124px;top:549px;width:193px;height:32px;"><span class="ab g">详情</span><span class="ab y">编辑</span><span class="ab r">删除</span></div>
<div class="c" style="left:185px;top:581px;width:39px;height:31px;"><span class="cb"></span></div>
<div class="c" style="left:224px;top:581px;width:113px;height:31px;"><span class="lnk">20210319145434</span></div>
<div class="c" style="left:337px;top:581px;width:77px;height:31px;">黄鹤楼硬珍...</div>
<div class="c" style="left:414px;top:581px;width:77px;height:31px;">HHLYZY</div>
<div class="c" style="left:491px;top:581px;width:81px;height:31px;">45</div>
<div class="c" style="left:572px;top:581px;width:77px;height:31px;">普通</div>
<div class="c" style="left:649px;top:581px;width:81px;height:31px;">0</div>
<div class="c" style="left:730px;top:581px;width:77px;height:31px;"></div>
<div class="c" style="left:807px;top:581px;width:77px;height:31px;">烟</div>
<div class="c" style="left:884px;top:581px;width:77px;height:31px;"><span class="store">纳客软件零...</span></div>
<div class="c" style="left:961px;top:581px;width:82px;height:31px;"><span class="sw on"><i></i></span></div>
<div class="c" style="left:1043px;top:581px;width:81px;height:31px;"><span class="sw off"><i></i></span></div>
<div class="c" style="left:1124px;top:581px;width:193px;height:31px;"><span class="ab g">详情</span><span class="ab y">编辑</span><span class="ab r">删除</span></div>
 <div class="abs" style="left:952px;top:140px;width:8px;height:480px;background:linear-gradient(to right,rgba(0,0,0,0),rgba(0,0,0,.035))"></div><div class="abs" style="left:961px;top:140px;width:1px;height:480px;background:#f0f0f0"></div>
 </div>
</div>
<div class="abs" style="left:1355px;top:335px;width:8px;height:58px;border-radius:4px;background:linear-gradient(#9a9a9a 0,#9a9a9a 7px,#2ec56a 7px,#38d672 70%,#7be38f 100%);box-shadow:0 0 3px rgba(0,0,0,.12)"></div>
</body></html>
